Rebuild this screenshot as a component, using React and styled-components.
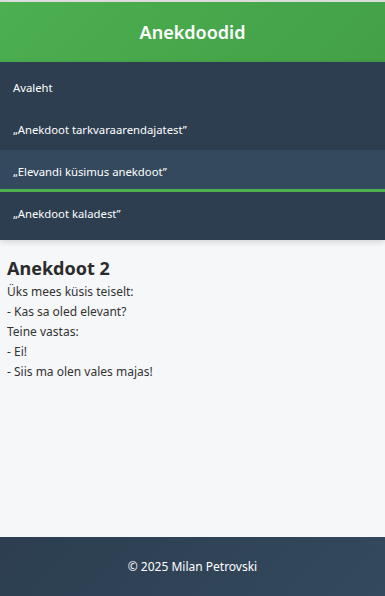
import React from "react";
import styled, { createGlobalStyle } from "styled-components";

const GlobalStyle = createGlobalStyle`
  html, body {
    margin: 0;
    padding: 0;
    height: 100%;
  }
  body {
    font-family: "Noto Sans", "Open Sans", sans-serif;
    background: #f6f7f9;
    border-top: 2px solid #dcdcdc;
    box-sizing: border-box;
  }
  #root {
    min-height: 594px;
    display: flex;
    flex-direction: column;
  }
`;

const links = [
  { label: "Avaleht" },
  { label: "„Anekdoot tarkvaraarendajatest”" },
  { label: "„Elevandi küsimus anekdoot”", active: true },
  { label: "„Anekdoot kaladest”" },
];

const lines = [
  "Üks mees küsis teiselt:",
  "- Kas sa oled elevant?",
  "Teine vastas:",
  "- Ei!",
  "- Siis ma olen vales majas!",
];

const App = () => {
  return (
    <Page>
      <GlobalStyle />
      <Header>
        <Title>Anekdoodid</Title>
      </Header>
      <Nav>
        {links.map((link) => (
          <NavItem key={link.label} $active={link.active}>
            {link.label}
          </NavItem>
        ))}
      </Nav>
      <Main>
        <Heading>Anekdoot 2</Heading>
        {lines.map((line) => (
          <Line key={line}>{line}</Line>
        ))}
      </Main>
      <Footer>© 2025 Milan Petrovski</Footer>
    </Page>
  );
};

export default App;

const Page = styled.div`
  flex: 1;
  display: flex;
  flex-direction: column;
`;

const Header = styled.header`
  height: 60px;
  display: flex;
  align-items: center;
  justify-content: center;
  background: linear-gradient(135deg, #4caf50, #43a047);
`;

const Title = styled.h1`
  margin: 0;
  color: #fff;
  font-size: 18px;
  font-weight: 600;
`;

const Nav = styled.nav`
  display: flex;
  flex-direction: column;
  padding: 4px 0 6px;
  background: #2c3e50;
  box-shadow: 0 2px 6px rgba(0, 0, 0, 0.15);
  position: relative;
`;

const NavItem = styled.a`
  box-sizing: border-box;
  height: 42px;
  display: flex;
  align-items: center;
  padding: 3px 13px 0;
  color: #fff;
  font-size: 11.3px;
  background: ${(p) => (p.$active ? "#34495e" : "transparent")};
  border-bottom: 3px solid ${(p) => (p.$active ? "#4caf50" : "transparent")};
`;

const Main = styled.main`
  flex: 1;
  padding: 16px 7px;
  color: #333;
`;

const Heading = styled.h2`
  margin: 0 0 2px;
  font-size: 18px;
  font-weight: 700;
  color: #2b2b2b;
  line-height: 24px;
`;

const Line = styled.div`
  font-size: 12px;
  line-height: 20px;
`;

const Footer = styled.footer`
  height: 59px;
  display: flex;
  align-items: center;
  justify-content: center;
  color: #fff;
  font-size: 12px;
  background: linear-gradient(135deg, #2c3e50, #34495e);
`;
